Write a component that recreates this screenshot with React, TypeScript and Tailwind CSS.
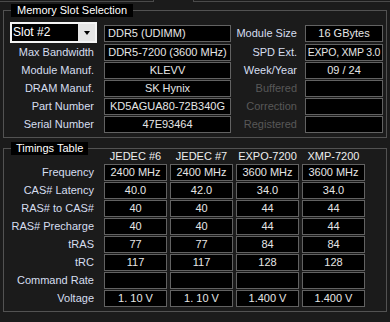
import React from "react";

const slotRows = [
  { label: "Max Bandwidth", value: "DDR5-7200 (3600 MHz)", rLabel: "SPD Ext.", rValue: "EXPO, XMP 3.0", off: false },
  { label: "Module Manuf.", value: "KLEVV", rLabel: "Week/Year", rValue: "09 / 24", off: false },
  { label: "DRAM Manuf.", value: "SK Hynix", rLabel: "Buffered", rValue: "", off: true },
  { label: "Part Number", value: "KD5AGUA80-72B340G", rLabel: "Correction", rValue: "", off: true },
  { label: "Serial Number", value: "47E93464", rLabel: "Registered", rValue: "", off: true },
];

const cols = ["JEDEC #6", "JEDEC #7", "EXPO-7200", "XMP-7200"];

const timings = [
  { label: "Frequency", v: ["2400 MHz", "2400 MHz", "3600 MHz", "3600 MHz"] },
  { label: "CAS# Latency", v: ["40.0", "42.0", "34.0", "34.0"] },
  { label: "RAS# to CAS#", v: ["40", "40", "44", "44"] },
  { label: "RAS# Precharge", v: ["40", "40", "44", "44"] },
  { label: "tRAS", v: ["77", "77", "84", "84"] },
  { label: "tRC", v: ["117", "117", "128", "128"] },
  { label: "Command Rate", v: ["", "", "", ""] },
  { label: "Voltage", v: ["1. 10 V", "1. 10 V", "1.400 V", "1.400 V"] },
];

function Box({ children, className = "" }: { children?: React.ReactNode; className?: string }) {
  return (
    <div
      className={`h-[17px] border border-[#626262] bg-black text-[#e6e6e6] text-center leading-[15px] whitespace-nowrap overflow-hidden ${className}`}
    >
      {children}
    </div>
  );
}

export default function App() {
  return (
    <div className="w-[390px] h-[322px] overflow-hidden bg-[#1b1b1b] font-['Liberation_Sans',Arial,sans-serif] text-[11px] text-[#d6def0]">
      {/* tab strip */}
      <div className="flex h-[2px]">
        <div className="w-[154px] border-b border-r border-[#4a4a4a]" />
        <div className="w-[39px]" />
        <div className="flex-1 border-b border-l border-[#4a4a4a]" />
      </div>

      {/* Memory Slot Selection */}
      <fieldset className="mx-[3px] mt-[2px] border border-[#525252] pt-[5px] pb-[4px]">
        <legend className="ml-[7px] h-[13px] bg-black px-[6px] leading-[13px] text-white">Memory Slot Selection</legend>
        <div className="flex flex-col gap-[1px]">
          <div className="flex h-[21px]">
            <div className="ml-[6px] flex h-[21px] w-[87px] border-2 border-[#f4f4f4] bg-black">
              <span className="flex-1 pl-[1px] leading-[16px] text-white text-[12px]">Slot #2</span>
              <div className="flex w-[17px] items-center justify-center bg-[#e4e4e4]">
                <div className="h-0 w-0 border-x-[3.5px] border-t-[4px] border-x-transparent border-t-black" />
              </div>
            </div>
            <Box className="ml-[7px] mt-[3px] w-[127px] text-left pl-[3px]">DDR5 (UDIMM)</Box>
            <div className="mt-[3px] w-[66px] text-right leading-[17px]">Module Size</div>
            <Box className="ml-[8px] mt-[3px] w-[78px]">16 GBytes</Box>
          </div>
          {slotRows.map((r) => (
            <div key={r.label} className="flex h-[17px]">
              <div className="w-[90px] text-right leading-[17px]">{r.label}</div>
              <Box className="ml-[10px] w-[127px]">{r.value}</Box>
              <div className={`w-[66px] text-right leading-[17px] ${r.off ? "text-[#585858]" : ""}`}>{r.rLabel}</div>
              <Box className={`ml-[8px] w-[78px] ${r.rValue.length > 10 ? "text-[10.5px] tracking-[-0.2px]" : ""}`}>
                {r.rValue}
              </Box>
            </div>
          ))}
        </div>
      </fieldset>

      {/* Timings Table */}
      <fieldset className="mx-[3px] mt-[4px] border border-[#525252] pb-[4px]">
        <legend className="ml-[7px] h-[13px] bg-black px-[5px] leading-[13px] text-white">Timings Table</legend>
        <div className="-mt-[5px] flex h-[13px] leading-[13px] text-[#eeeeee]">
          <div className="w-[100px]" />
          <div className="flex gap-[3px]">
            {cols.map((c) => (
              <div key={c} className="w-[63px] text-center whitespace-nowrap">{c}</div>
            ))}
          </div>
        </div>
        <div className="mt-[1px] flex flex-col gap-[1px]">
          {timings.map((t) => (
            <div key={t.label} className="flex h-[17px]">
              <div className="w-[90px] text-right leading-[17px] whitespace-nowrap">{t.label}</div>
              <div className="ml-[10px] flex gap-[3px]">
                {t.v.map((v, i) => (
                  <Box key={i} className="w-[63px]">{v}</Box>
                ))}
              </div>
            </div>
          ))}
        </div>
      </fieldset>
    </div>
  );
}
